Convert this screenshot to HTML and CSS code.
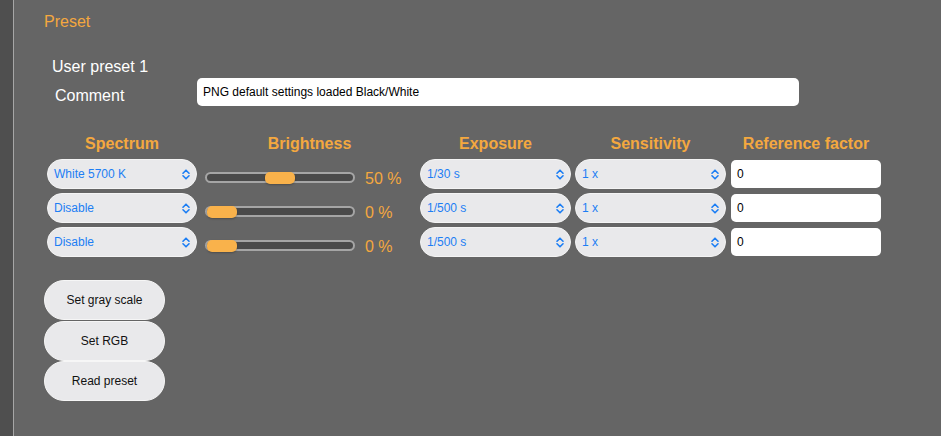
FILE: index.html
```html
<!DOCTYPE html>
<html>
<head>
<meta charset="utf-8">
<link rel="stylesheet" href="styles.css">
</head>
<body>
<div class="page">
  <div class="rail"></div>
  <div class="main">
    <h2 class="title">Preset</h2>
    <div class="preset-name">User preset 1</div>
    <div class="comment-row">
      <label class="comment-label">Comment</label>
      <div class="text-input comment-input">PNG default settings loaded Black/White</div>
    </div>

    <div class="grid">
      <div class="head">Spectrum</div>
      <div class="head head-bright">Brightness</div>
      <div class="head">Exposure</div>
      <div class="head">Sensitivity</div>
      <div class="head">Reference factor</div>

      <div class="select w150"><span>White 5700 K</span><svg class="chev" width="8" height="11" viewBox="0 0 8 11"><path d="M1 4.2 L4 1.2 L7 4.2 M1 6.8 L4 9.8 L7 6.8"/></svg></div>
      <div class="slider"><div class="track"></div><div class="thumb" style="left:60px"></div></div>
      <div class="value">50 %</div>
      <div class="select w151"><span>1/30 s</span><svg class="chev" width="8" height="11" viewBox="0 0 8 11"><path d="M1 4.2 L4 1.2 L7 4.2 M1 6.8 L4 9.8 L7 6.8"/></svg></div>
      <div class="select w151"><span>1 x</span><svg class="chev" width="8" height="11" viewBox="0 0 8 11"><path d="M1 4.2 L4 1.2 L7 4.2 M1 6.8 L4 9.8 L7 6.8"/></svg></div>
      <div class="text-input ref">0</div>

      <div class="select w150"><span>Disable</span><svg class="chev" width="8" height="11" viewBox="0 0 8 11"><path d="M1 4.2 L4 1.2 L7 4.2 M1 6.8 L4 9.8 L7 6.8"/></svg></div>
      <div class="slider"><div class="track"></div><div class="thumb" style="left:2px"></div></div>
      <div class="value">0 %</div>
      <div class="select w151"><span>1/500 s</span><svg class="chev" width="8" height="11" viewBox="0 0 8 11"><path d="M1 4.2 L4 1.2 L7 4.2 M1 6.8 L4 9.8 L7 6.8"/></svg></div>
      <div class="select w151"><span>1 x</span><svg class="chev" width="8" height="11" viewBox="0 0 8 11"><path d="M1 4.2 L4 1.2 L7 4.2 M1 6.8 L4 9.8 L7 6.8"/></svg></div>
      <div class="text-input ref">0</div>

      <div class="select w150"><span>Disable</span><svg class="chev" width="8" height="11" viewBox="0 0 8 11"><path d="M1 4.2 L4 1.2 L7 4.2 M1 6.8 L4 9.8 L7 6.8"/></svg></div>
      <div class="slider"><div class="track"></div><div class="thumb" style="left:2px"></div></div>
      <div class="value">0 %</div>
      <div class="select w151"><span>1/500 s</span><svg class="chev" width="8" height="11" viewBox="0 0 8 11"><path d="M1 4.2 L4 1.2 L7 4.2 M1 6.8 L4 9.8 L7 6.8"/></svg></div>
      <div class="select w151"><span>1 x</span><svg class="chev" width="8" height="11" viewBox="0 0 8 11"><path d="M1 4.2 L4 1.2 L7 4.2 M1 6.8 L4 9.8 L7 6.8"/></svg></div>
      <div class="text-input ref">0</div>
    </div>

    <div class="buttons">
      <button class="btn">Set gray scale</button>
      <button class="btn">Set RGB</button>
      <button class="btn">Read preset</button>
    </div>
  </div>
</div>
</body>
</html>
```

FILE: styles.css
```css
* { box-sizing: border-box; }
html, body {
  margin: 0;
  padding: 0;
  background: #656565;
  font-family: "Liberation Sans", Arial, sans-serif;
}
.page {
  display: flex;
  width: 941px;
  height: 436px;
  overflow: hidden;
}
.rail {
  width: 14px;
  flex: none;
  background: #4f4f4f;
  border-right: 1px solid #a6a6a6;
}
.main {
  flex: 1;
  padding: 12px 0 0 30px;
}
.title {
  margin: 0;
  font-size: 16px;
  font-weight: normal;
  line-height: 20px;
  color: #f4a83f;
}
.preset-name {
  margin-top: 25px;
  padding-left: 8px;
  font-size: 16px;
  line-height: 20px;
  color: #ffffff;
}
.comment-row {
  display: flex;
  align-items: center;
  margin-top: 1px;
  height: 28px;
}
.comment-label {
  width: 153px;
  padding-left: 11px;
  padding-top: 7px;
  font-size: 16px;
  color: #ffffff;
}
.text-input {
  background: #ffffff;
  border-radius: 5px;
  height: 28px;
  font-size: 12px;
  line-height: 28px;
  padding-left: 6px;
  color: #000;
}
.comment-input {
  width: 602px;
}
.grid {
  display: grid;
  grid-template-columns: 158px 160px 55px 155px 156px 150px;
  row-gap: 4px;
  margin-top: 28px;
  margin-left: 3px;
}
.head {
  font-size: 16px;
  font-weight: bold;
  color: #f4a83f;
  line-height: 20px;
  height: 21px;
  text-align: center;
  padding-right: 8px;
}
.head-bright {
  grid-column: span 2;
  padding-right: 6px;
}
.head:nth-child(3) { padding-right: 4px; }
.head:nth-child(4) { padding-right: 5px; }
.head:nth-child(5) { padding-right: 0; }
.select {
  height: 30px;
  border: 1px solid #f4f4f4;
  border-radius: 15px;
  background: #e9e9eb;
  color: #1c7ef4;
  font-size: 12px;
  display: flex;
  align-items: center;
  justify-content: space-between;
  padding: 0 6px 0 6px;
}
.w150 { width: 150px; }
.w151 { width: 151px; }
.chev {
  fill: none;
  stroke: #1c7ef4;
  stroke-width: 1.6;
  stroke-linecap: round;
  stroke-linejoin: round;
}
.slider {
  position: relative;
  width: 150px;
  padding-top: 13px;
}
.track {
  height: 11px;
  border: 2px solid #a5a5a5;
  border-radius: 6px;
  background: #4a4a4a;
}
.thumb {
  position: absolute;
  top: 13px;
  width: 30px;
  height: 12px;
  border-radius: 5px;
  background: #f9b24b;
  box-shadow: 0 1px 2px rgba(0,0,0,0.25);
}
.value {
  font-size: 16px;
  color: #f4a83f;
  line-height: 20px;
  padding-top: 10px;
}
.ref {
  width: 150px;
  align-self: center;
}
.buttons {
  display: flex;
  flex-direction: column;
  margin-top: 23px;
  width: 121px;
}
.btn {
  height: 40px;
  border: 1px solid #f6f6f6;
  border-radius: 20px;
  background: #e9e9eb;
  font-family: "Liberation Sans", Arial, sans-serif;
  font-size: 12px;
  color: #111;
  padding: 0;
  margin: 0 0 0.5px 0;
}
```
